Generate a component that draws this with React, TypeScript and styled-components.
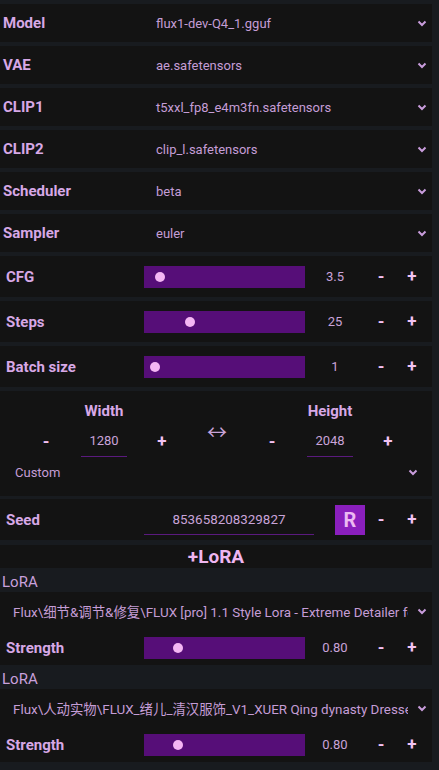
import React from 'react';
import styled, { createGlobalStyle } from 'styled-components';

const GlobalStyle = createGlobalStyle`
  html, body {
    margin: 0;
    padding: 0;
    background: #181b1f;
    font-family: Roboto, "Noto Sans", "Noto Sans CJK SC", sans-serif;
  }
`;

const Panel = styled.div`
  width: 432px;
  padding-top: 4px;
  display: flex;
  flex-direction: column;
`;

const Card = styled.div<{ $gap?: number }>`
  background: #131313;
  margin-bottom: ${(p) => p.$gap ?? 4}px;
`;

const SelectRow = styled(Card)`
  height: 38px;
  display: grid;
  grid-template-columns: 153px 1fr 10px;
  align-items: center;
  padding: 0 5px 0 3px;
`;

const Label = styled.div`
  font-size: 15px;
  font-weight: 700;
  color: #d7a8e6;
  white-space: nowrap;
`;

const Value = styled.div`
  font-size: 13px;
  color: #c59dd6;
  white-space: nowrap;
`;

const SliderRow = styled(Card)<{ $h?: number }>`
  height: ${(p) => p.$h ?? 41}px;
  display: grid;
  grid-template-columns: 138px 161px 60px 32px 30px;
  align-items: center;
  padding-left: 6px;
`;

const Track = styled.div`
  position: relative;
  height: 22px;
  background: #560e78;
`;

const Thumb = styled.div`
  position: absolute;
  top: 6px;
  width: 10px;
  height: 10px;
  border-radius: 50%;
  background: #f4b6f4;
`;

const Num = styled.div`
  text-align: center;
  font-size: 13px;
  color: #c9a3d9;
`;

const Step = styled.div`
  text-align: center;
  font-size: 17px;
  font-weight: 700;
  color: #f3c3f3;
  line-height: 1;
`;

const SizeBlock = styled(Card)`
  height: 105px;
  display: flex;
  flex-direction: column;
`;

const SizeTop = styled.div`
  display: grid;
  grid-template-columns: 200px 26px 200px;
  padding: 9px 0 0 4px;
`;

const SizeGroup = styled.div`
  display: flex;
  flex-direction: column;
  align-items: center;
`;

const SizeLabel = styled(Label)`
  height: 25px;
  line-height: 22px;
`;

const SizeControls = styled.div`
  display: grid;
  grid-template-columns: 40px 46px 40px;
  column-gap: 15px;
  align-items: center;
`;

const NumInput = styled.div`
  height: 32px;
  line-height: 32px;
  text-align: center;
  font-size: 13px;
  color: #c9a3d9;
  border-bottom: 1px solid #5a1a7e;
  box-sizing: border-box;
`;

const Swap = styled.div`
  text-align: center;
  padding-top: 23px;
  font-size: 20px;
  color: #c9a3d9;
  line-height: 1;
`;

const CustomRow = styled.div`
  display: flex;
  align-items: center;
  justify-content: space-between;
  padding: 8px 14px 0 15px;
`;

const SeedRow = styled(Card)`
  height: 41px;
  display: grid;
  grid-template-columns: 138px 170px 51px 32px 30px;
  align-items: center;
  padding-left: 6px;
`;

const SeedInput = styled(NumInput)`
  height: 30px;
  line-height: 30px;
  font-size: 13.4px;
`;

const RButton = styled.div`
  justify-self: end;
  width: 30px;
  height: 30px;
  background: #8a1fbd;
  color: #ecb9f2;
  font-size: 20px;
  font-weight: 700;
  display: flex;
  align-items: center;
  justify-content: center;
`;

const AddLora = styled(Card)`
  height: 23px;
  margin-bottom: 0;
  margin-top: 1px;
  text-align: center;
  font-size: 19px;
  font-weight: 700;
  line-height: 23px;
  color: #efb6f0;
`;

const LoraTitle = styled.div`
  height: 24px;
  line-height: 28px;
  padding-left: 2px;
  font-size: 15px;
  color: #c9a0dc;
`;

const LoraBlock = styled(Card)`
  margin-bottom: 0;
`;

const LoraSelect = styled.div`
  height: 38px;
  display: grid;
  grid-template-columns: 395px 1fr;
  align-items: center;
  padding: 0 5px 0 13px;
`;

const LoraName = styled.div`
  overflow: hidden;
  white-space: nowrap;
  font-size: 13.4px;
  color: #c59dd6;
`;

const ChevronBox = styled.div`
  display: flex;
  justify-content: flex-end;
`;

function Chevron() {
  return (
    <svg width="10" height="7" viewBox="0 0 10 7">
      <polyline points="1.5,1.5 5,5 8.5,1.5" fill="none" stroke="#c99ddc" strokeWidth="2" />
    </svg>
  );
}

const selects = [
  { label: 'Model', value: 'flux1-dev-Q4_1.gguf' },
  { label: 'VAE', value: 'ae.safetensors' },
  { label: 'CLIP1', value: 't5xxl_fp8_e4m3fn.safetensors' },
  { label: 'CLIP2', value: 'clip_l.safetensors' },
  { label: 'Scheduler', value: 'beta' },
  { label: 'Sampler', value: 'euler' }
];

const sliders = [
  { label: 'CFG', value: '3.5', pos: 0.034 },
  { label: 'Steps', value: '25', pos: 0.235 },
  { label: 'Batch size', value: '1', pos: 0 }
];

const loras = [
  { name: 'Flux\\细节&调节&修复\\FLUX [pro] 1.1 Style Lora - Extreme Detailer for FLUX', strength: '0.80', pos: 0.154 },
  { name: 'Flux\\人动实物\\FLUX_绪儿_清汉服饰_V1_XUER Qing dynasty Dresses', strength: '0.80', pos: 0.154 }
];

function Slider({ pos }: { pos: number }) {
  return (
    <Track>
      <Thumb style={{ left: 6 + pos * 149 }} />
    </Track>
  );
}

function Size({ label, value }: { label: string; value: string }) {
  return (
    <SizeGroup>
      <SizeLabel>{label}</SizeLabel>
      <SizeControls>
        <Step>-</Step>
        <NumInput>{value}</NumInput>
        <Step>+</Step>
      </SizeControls>
    </SizeGroup>
  );
}

export default function App() {
  return (
    <>
      <GlobalStyle />
      <Panel>
        {selects.map((s) => (
          <SelectRow key={s.label}>
            <Label>{s.label}</Label>
            <Value>{s.value}</Value>
            <Chevron />
          </SelectRow>
        ))}

        {sliders.map((s) => (
          <SliderRow key={s.label}>
            <Label>{s.label}</Label>
            <Slider pos={s.pos} />
            <Num>{s.value}</Num>
            <Step>-</Step>
            <Step>+</Step>
          </SliderRow>
        ))}

        <SizeBlock $gap={3}>
          <SizeTop>
            <Size label="Width" value="1280" />
            <Swap>↔</Swap>
            <Size label="Height" value="2048" />
          </SizeTop>
          <CustomRow>
            <Value>Custom</Value>
            <Chevron />
          </CustomRow>
        </SizeBlock>

        <SeedRow>
          <Label>Seed</Label>
          <SeedInput>853658208329827</SeedInput>
          <RButton>R</RButton>
          <Step>-</Step>
          <Step>+</Step>
        </SeedRow>

        <AddLora>+LoRA</AddLora>

        {loras.map((l, i) => (
          <React.Fragment key={i}>
            <LoraTitle>LoRA</LoraTitle>
            <LoraBlock>
              <LoraSelect>
                <LoraName>{l.name}</LoraName>
                <ChevronBox>
                  <Chevron />
                </ChevronBox>
              </LoraSelect>
              <SliderRow $h={35} $gap={0}>
                <Label>Strength</Label>
                <Slider pos={l.pos} />
                <Num>{l.strength}</Num>
                <Step>-</Step>
                <Step>+</Step>
              </SliderRow>
            </LoraBlock>
          </React.Fragment>
        ))}
      </Panel>
    </>
  );
}
